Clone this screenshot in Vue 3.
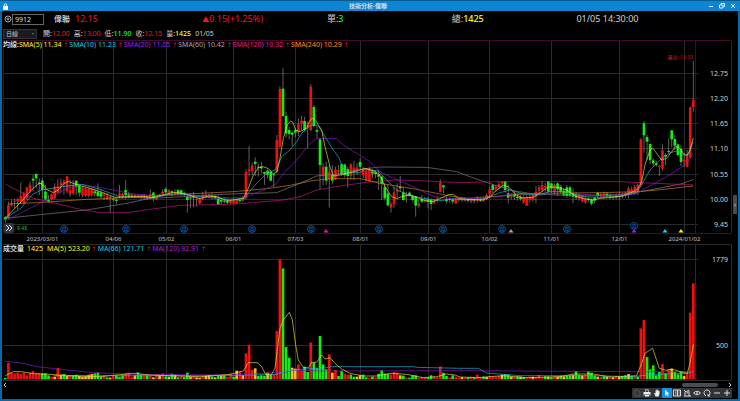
<script setup>
// Chart data is kept on a fine grid: three units per drawing unit.
const STEP = 9.2556
const cx = (i) => 16 + i * STEP

// colour, high, body top, body bottom, low
const candleData = `
g 498 502 508 518|r 455 465 503 508|r 448 460 466 470|r 446 452 455 475|r 445 448 454 478|r 398 438 455 462|r 425 430 460 463|r 410 413 445 450|r 395 404 424 430|g 375 386 392 425|
g 370 372 385 415|g 385 398 402 435|g 385 392 420 445|g 405 425 448 452|g 435 450 455 458|r 430 433 448 452|r 400 410 445 448|r 388 408 428 432|r 386 398 405 430|r 388 394 400 435|
r 378 379 424 430|r 390 420 433 440|r 390 405 430 435|g 390 392 410 435|g 405 408 428 440|r 408 412 436 442|r 412 415 437 440|r 414 416 438 441|r 415 417 434 440|g 418 424 430 440|
g 400 425 438 443|g 420 428 440 445|r 428 433 437 450|r 430 438 445 450|r 438 440 444 488|g 443 446 449 455|g 445 449 453 463|r 405 430 436 445|r 428 432 440 445|g 390 420 435 448|
g 425 433 437 445|r 430 433 440 444|r 432 436 440 445|r 434 438 441 444|r 435 438 443 448|g 432 440 443 448|r 436 440 447 450|r 418 432 442 448|g 425 428 445 455|r 438 441 447 450|
r 432 434 438 440|r 418 425 432 438|g 412 417 427 432|r 418 422 430 433|g 420 424 428 440|r 418 427 430 436|g 418 420 432 436|g 418 421 433 436|g 425 430 434 440|g 436 441 450 488|
g 430 442 445 475|g 425 440 443 472|r 440 446 450 470|r 442 446 460 463|r 425 434 447 450|r 420 434 440 445|r 430 436 440 445|g 428 437 441 448|g 434 438 444 448|g 436 447 463 465|
g 445 450 455 462|g 446 452 455 460|g 448 452 458 463|r 450 453 459 463|r 445 452 460 462|r 447 449 459 462|g 445 450 453 458|r 438 443 452 455|r 358 366 444 448|r 288 358 364 380|
r 338 346 363 375|g 322 335 342 378|g 342 350 353 380|g 335 350 355 370|g 365 366 371 405|g 358 362 374 385|g 360 366 392 394|g 370 373 376 412|r 255 270 365 368|r 110 117 290 295|
g 55 116 198 200|g 186 198 250 262|g 230 240 252 268|g 245 248 254 288|g 235 240 248 262|r 205 221 246 258|r 198 212 222 240|g 200 213 240 245|r 215 225 232 295|r 102 110 240 243|
g 165 171 228 232|g 230 240 245 265|g 262 268 345 418|r 340 350 376 405|g 335 350 392 405|r 345 366 388 473|g 345 375 392 403|r 350 358 388 390|r 345 360 365 375|g 340 343 372 378|
g 340 344 375 382|g 350 357 378 413|r 340 343 378 388|r 332 354 362 390|r 340 352 362 375|g 325 336 350 358|r 350 359 376 385|r 355 362 390 395|r 350 356 393 396|g 358 364 371 385|
g 362 367 372 385|g 360 374 380 420|g 378 380 402 450|g 400 412 445 452|g 402 430 466 470|r 455 462 473 488|r 410 427 463 473|r 400 420 425 445|g 378 410 415 425|g 410 427 450 452|
r 425 432 438 458|g 424 428 438 440|g 435 438 450 455|g 437 439 467 500|r 450 460 468 475|g 435 447 455 460|r 440 448 452 458|g 440 448 455 475|g 445 450 462 480|r 447 450 458 463|
r 440 446 450 458|r 388 397 425 427|g 404 406 412 430|g 440 447 453 460|g 442 447 450 458|g 445 449 455 462|r 443 447 460 462|r 444 447 451 455|g 443 447 450 456|r 442 447 451 455|
g 443 448 452 458|r 444 450 454 460|g 445 449 452 460|r 438 445 452 458|g 443 448 452 456|r 440 445 452 455|r 430 435 448 450|r 410 418 434 445|g 402 405 420 430|r 405 410 418 425|
r 395 402 412 420|r 393 395 400 410|g 392 394 420 428|g 405 430 443 460|r 430 435 440 448|g 425 433 440 450|g 432 440 444 452|g 436 441 447 452|r 436 443 458 460|r 436 441 467 468|
r 435 440 450 458|r 430 434 450 455|r 408 425 440 460|r 405 412 422 428|r 393 405 420 425|r 400 408 412 425|g 393 394 425 428|g 398 400 415 430|r 400 405 425 433|g 398 400 418 438|
g 405 410 425 430|g 415 422 435 440|g 405 412 438 443|g 408 412 436 440|g 415 430 440 460|g 425 437 443 450|r 430 437 446 452|r 435 438 453 458|r 440 446 457 462|g 443 445 449 455|
g 445 448 461 466|g 440 443 452 460|g 425 428 438 445|r 428 432 438 443|r 425 430 440 445|g 426 431 439 443|g 430 434 440 448|r 432 437 441 450|g 430 437 441 448|r 425 433 440 450|
r 428 433 438 445|r 425 430 436 442|r 410 415 435 445|r 410 418 428 435|r 405 410 430 433|r 400 405 425 435|r 265 268 405 410|g 213 220 256 308|g 255 261 275 330|g 280 282 330 342|
g 325 331 340 348|g 332 340 345 350|r 345 347 350 378|r 283 302 356 362|g 310 315 320 345|g 265 303 306 310|g 240 241 268 292|g 255 267 287 300|g 280 283 315 320|g 285 297 336 348|
r 310 330 334 352|r 300 318 350 352|r 170 172 322 325|r 33 150 172 185`

const candles = candleData.trim().split('|').map((row, i) => {
  const [color, high, top, bottom, low] = row.trim().split(' ')
  return { x: cx(i), color, high: +high, top: +top, h: bottom - top, low: +low }
})

// colour and height of each volume bar; the rally is a run of its own
const RALLY_START = 206
const quietVolume = `
g4 r50 r20 r18 r20 r16 r20 r12 r20 r25 r18 r18 g18 g18 g12 r8 y8 r34 y14 g16 y10 r12 g12 g14 y10 y8 y9 y14 y16 g18
g20 g8 r12 g6 y5 r10 g12 g8 g12 r18 r20 r8 y12 g21 g14 r12 g12 r10 y6 r14 y12 r18 g9 y8 g17 y14 g6 r9 g7 g20
y8 r9 y6 y5 r8 y10 y13 g9 y6 g11 y12 g12 r7 r17 g8 y26 r24 y12 r78 r104 r28 y33 g10 g12 g10 y20 g13 r14
r145 r360 g333 g97 g65 y35 y32 r45 r25 g38 g22 r111 g50 g33 g130 g45 g30 r75 y20 r28 g10 g25 r16 r14 g14 g8 y8 y12 g14 g6
r5 g8 r6 g17 g27 g17 g16 r15 r22 r20 y12 g11 r5 g5 g12 g12 r5 r7 r6 g6 g12 r8 r6 r39 g20 g10 r6 g12 r8 r5 y6
r5 g6 r8 g5 r14 r6 g8 y7 r9 r8 r8 r10 y14 g16 g14 y8 r7 g9 y8 g7 r6 r8 y8 r7 r13 r6 g9 y8 g6 r9
y8 g11 y9 g10 g12 y14 g25 g14 y12 r14 g24 g20 g12 y8 r7 g9 y7 r8 y6 r9 y7 g10 g12 y16 g9 r8 g8 y10 r14 r12`
const rallyVolume = 'r153 r178 g67 g30 g42 g12 g22 r46 g18 r30 y32 g22 g15 g24 y10 r20 r200 r288'
const toBars = (text, start) => text.trim().split(/\s+/).map((v, i) => ({
  x: cx(start + i) - 4, color: v[0], h: +v.slice(1)
}))
const bars = [...toBars(quietVolume, 0).slice(0, RALLY_START), ...toBars(rallyVolume, RALLY_START)]

const priceLines = [
  { name: 'sma60', points: '16,505 130,493 260,480 380,460 450,445 550,440 690,432 830,428 900,400 950,378 1010,372 1080,358 1140,351 1280,352 1370,365 1415,382 1480,404 1540,422 1600,432 1700,436 1850,435 1950,420 2050,400 2080,388' },
  { name: 'sma120', points: '16,403 60,425 100,445 180,463 240,478 300,488 380,488 450,478 540,466 690,463 760,458 850,450 900,440 950,420 1020,408 1100,397 1190,390 1260,392 1380,398 1500,395 1860,395 1920,398 2080,405' },
  { name: 'sma240', points: '25,462 130,457 260,448 380,443 500,434 600,430 700,425 800,416 870,406 930,393 990,386 1080,386 1140,400 1250,418 1350,438 1400,445 1500,438 1600,430 1800,428 1920,425 2000,417 2080,408' },
  { name: 'sma20', points: '25,508 80,480 130,455 200,415 245,403 330,418 400,432 480,438 560,434 690,444 740,440 790,420 828,402 850,370 890,330 930,280 950,266 1010,266 1030,285 1070,310 1110,335 1140,365 1180,385 1240,410 1300,440 1380,448 1500,440 1540,430 1640,432 1720,430 1800,438 1912,432 1930,418 1960,402 2000,380 2040,355 2060,340 2080,310' },
  { name: 'sma10', points: '16,505 62,475 99,432 125,420 170,413 200,408 245,403 300,418 360,440 450,444 530,430 600,440 690,448 733,446 760,410 800,370 825,360 835,345 845,320 870,300 890,275 905,250 920,235 935,225 955,228 975,260 1000,300 1018,325 1026,350 1040,368 1080,368 1095,358 1135,363 1160,390 1190,420 1230,436 1270,445 1320,452 1360,447 1400,450 1450,447 1500,428 1530,420 1570,432 1620,435 1650,424 1700,425 1750,440 1800,442 1860,440 1910,428 1930,395 1950,360 1980,330 2010,308 2030,303 2050,313 2065,315 2080,275' },
  { name: 'sma5', points: '16,505 62,457 99,415 118,400 127,402 140,418 160,428 175,420 190,402 205,394 225,402 245,408 270,415 300,425 345,442 380,440 430,438 455,443 490,435 520,427 550,430 575,438 600,446 625,438 650,440 675,450 690,452 730,445 745,415 760,375 775,353 790,350 805,356 820,372 831,365 840,325 850,265 862,225 872,213 878,216 887,240 900,245 920,235 928,215 935,205 945,208 955,225 965,240 975,290 990,350 1000,378 1020,375 1050,368 1075,362 1095,355 1120,362 1140,375 1155,410 1175,440 1190,446 1205,440 1230,435 1250,442 1275,452 1300,455 1320,446 1345,434 1360,433 1375,445 1400,448 1450,450 1470,440 1490,420 1510,406 1525,410 1550,436 1570,444 1600,442 1625,425 1645,411 1670,412 1700,420 1730,440 1760,448 1780,450 1800,445 1840,442 1870,437 1900,425 1915,415 1925,395 1935,345 1950,300 1958,294 1970,310 1985,330 2000,325 2015,305 2027,290 2040,295 2050,310 2060,318 2070,300 2080,264' }
]
const volumeLines = [
  { name: 'sma20', points: '16,409 70,415 110,425 200,435 280,443 400,448 690,450 850,442 880,436 980,438 1380,437 1900,440 2080,440' },
  { name: 'sma10', points: '160,452 690,452 830,448 850,440 870,435 980,428 990,425 1240,425 1250,427 1380,430 1435,430 1460,444 1560,452 1780,452 1900,455 1960,448 2060,445 2080,440' },
  { name: 'sma5', points: '16,452 40,440 65,440 100,446 150,448 200,452 300,455 400,445 450,450 600,455 690,448 730,438 745,413 772,413 785,425 797,448 815,448 825,430 840,310 850,285 868,262 877,285 887,360 895,405 910,428 925,428 935,412 950,412 965,390 975,402 990,398 1005,415 1025,432 1050,445 1090,453 1130,453 1170,445 1220,448 1270,458 1310,455 1340,447 1365,450 1380,456 1430,458 1510,452 1580,458 1680,455 1720,447 1780,447 1830,456 1910,452 1925,415 1935,385 1958,370 1968,400 1978,430 2000,436 2015,432 2040,440 2062,445 2070,415 2080,358' }
]

const gridX = [42.5, 113.5, 166.5, 233.5, 295.5, 360.5, 428.5, 489.5, 551.5, 619.5, 684.5]
const dates = ['2023/03/01', '04/06', '05/02', '06/01', '07/03', '08/01', '09/01', '10/02', '11/01', '12/01', '2024/01/02']
const priceTicks = [
  [73.5, '12.75'], [98.5, '12.20'], [123.5, '11.65'], [148.5, '11.10'], [174.5, '10.55'], [199.5, '10.00'], [224.5, '9.45']
]
const volumeTicks = [[259.5, '1779'], [345.5, '500']]
const monthMarks = [[64, 229], [126, 229], [184, 229], [252, 229], [311, 229], [379, 229], [443, 229], [502, 229], [567, 229], [634, 226]]
const flags = [[326, 'magenta'], [511, 'grey'], [634, 'violet'], [665, 'cyan'], [681, 'yellow']]

const quotes = [
  ['開', '12.00', 'red'], ['高', '13.00', 'red'], ['低', '11.90', 'green'], ['收', '12.15', 'red'], ['量', '1425', 'yellow']
]
const smaLegend = [
  ['SMA(5) 11.34', 'yellow'], ['SMA(10) 11.23', 'cyan'], ['SMA(20) 11.05', 'violet'],
  ['SMA(60) 10.42', 'grey'], ['SMA(120) 10.32', 'magenta'], ['SMA(240) 10.29', 'orange']
]
const maLegend = [['MA(5) 523.20', 'yellow'], ['MA(66) 121.71', 'cyan'], ['MA(120) 92.91', 'violet']]

const tools = [
  { name: '文件', cls: 'dim', d: 'M3 2h3l2 2v4H3z' },
  { name: '列印', cls: 'solid', d: 'M3 1.500h3l1 1V4h1.500v3.500H7.500V6h-5v1.500H1.500V4H3zM3.500 2.200V4h3V3L5.800 2.200zM3 6.500h4v2H3z' },
  { name: '拖曳', cls: 'solid', d: 'M2 5l1 0 .5 1V2.500h1V1.500h1v.7h1v.8h1V6L6.500 8.500h-3z' },
  { name: '選取', cls: 'solid active', d: 'M3 1.500L7.500 6H5.700L6.700 8l-1 .5L4.700 6.500 3 8z' },
  { name: '數值', d: 'M1.500 2h7v6h-7zM3 4h1.500M3 6h1.500M5.500 2v6M6.500 4h1M6.500 6h1' },
  { name: '畫線', d: 'M2 2l2 2 3-2M3 4v3.500M7 3v5M2 8h7M5 5.500L6 4' },
  { name: '顯示', d: 'M1.500 5Q5 1.500 8.500 5Q5 8.500 1.500 5zM4.500 5a.5.5 0 1 0 1 0a.5.5 0 1 0-1 0' },
  { name: '重設', d: 'M4 7.800A3 3 0 1 1 6.500 7.600M6 6v2h2' },
  { name: '縮小', d: 'M2 5h6' },
  { name: '放大', d: 'M2 5h6M5 2v6' }
]
</script>

<template>
  <div class="window">
    <header class="titlebar">
      <svg class="lock" viewBox="0 0 6 8"><path d="M1.500 4V2.200a1.500 1.500 0 0 1 3 0V4" fill="none" stroke="#fff" /><path d="M0 3.500h6V8H0z" fill="#fff" /></svg>
      <h1>技術分析-偉聯</h1>
      <div class="controls">
        <button aria-label="最小化"><svg viewBox="0 0 6 6"><path d="M1 3.500h4" /></svg></button>
        <button aria-label="還原"><svg viewBox="0 0 6 6"><path d="M2 1.500V.5h3.500v3h-1M.5 2h3.500v3H.5z" /></svg></button>
        <button aria-label="關閉"><svg viewBox="0 0 6 6"><path d="M1 1l4 4M5 1L1 5" /></svg></button>
      </div>
    </header>

    <main>
      <section class="summary">
        <div class="symbol">
          <button class="add" aria-label="加入"><svg viewBox="0 0 8 8"><circle cx="4" cy="4" r="3" /><path d="M2.500 4h3M4 2.500v3" /></svg></button>
          <input class="code" value="9912" aria-label="代號">
          <span class="name">偉聯</span>
          <span class="red">12.15</span>
        </div>
        <span class="red"><small>▲</small>0.15(+1.25%)</span>
        <span>單:<span class="green">3</span></span>
        <span>總:<span class="yellow">1425</span></span>
        <time>01/05 14:30:00</time>
      </section>

      <section class="quotes">
        <div class="period">
          <select aria-label="週期"><option>日線</option></select>
        </div>
        <span v-for="q in quotes" :key="q[0]">{{ q[0] }}:<span :class="q[2]">{{ q[1] }}</span></span>
        <span>01/05</span>
      </section>

      <section class="panel">
        <div class="legend">
          <b>均線:</b>
          <span v-for="s in smaLegend" :key="s[0]" :class="s[1]">{{ s[0] }} <i>↑</i></span>
        </div>
        <svg class="chart" viewBox="2 40 736 204">
          <g class="grid">
            <path v-for="x in gridX" :key="x" :d="`M${x} 41V233`" />
            <path v-for="t in priceTicks" :key="t[1]" :d="`M3 ${t[0]}H698`" />
            <path d="M731.5 41V233" />
          </g>
          <path class="frame" d="M3 40.500H731M3 233.500H731M695.500 41V233M3.500 41V233" />
          <g transform="translate(0 50) scale(.33333)">
            <g v-for="c in candles" :key="c.x" :class="['candle', c.color]">
              <path :d="`M${c.x} ${c.high}V${c.low}`" />
              <rect :x="c.x - 4" :y="c.top" width="8" :height="c.h" />
            </g>
            <polyline v-for="l in priceLines" :key="l.name" :class="['line', l.name]" :points="l.points" />
          </g>
          <g v-for="m in monthMarks" :key="m[0]" class="month">
            <circle :cx="m[0]" :cy="m[1]" r="3.500" />
            <text :x="m[0]" :y="m[1] + 2">月</text>
          </g>
          <path v-for="f in flags" :key="f[0]" :class="['flag', f[1]]" :d="`M${f[0]} 229l2.500 3.500h-5z`" />
          <text class="extreme high" x="693" y="59">最高: 13.00</text>
          <text class="extreme low" x="27" y="230">最低: 9.48</text>
          <g class="expand">
            <rect x="4" y="223" width="10" height="10" rx="2" />
            <path d="M6 225l3 3-3 3M9 225l3 3-3 3" />
          </g>
          <text v-for="t in priceTicks" :key="t[1]" class="tick" x="728" :y="t[0] + 2">{{ t[1] }}</text>
          <text v-for="(d, i) in dates" :key="d" class="date" :x="gridX[i]" y="241">{{ d }}</text>
        </svg>
        <button class="handle" aria-label="展開側欄">‹</button>
      </section>

      <section class="panel">
        <div class="legend volume">
          <b>成交量</b><span class="yellow total">1425</span>
          <span v-for="s in maLegend" :key="s[0]" :class="s[1]">{{ s[0] }} <i>↑</i></span>
        </div>
        <svg class="chart" viewBox="2 244 736 137">
          <g class="grid">
            <path v-for="x in gridX" :key="x" :d="`M${x} 245V380`" />
            <path v-for="t in volumeTicks" :key="t[1]" :d="`M3 ${t[0]}H698`" />
            <path d="M3 244.500H731.500V380.500H3M695.500 245V380" />
          </g>
          <g transform="translate(0 225) scale(.33333)">
            <rect v-for="b in bars" :key="b.x" :class="['bar', b.color]" :x="b.x" :y="463 - b.h" width="8" :height="b.h" />
            <polyline v-for="l in volumeLines" :key="l.name" :class="['line', l.name]" :points="l.points" />
          </g>
          <text v-for="t in volumeTicks" :key="t[1]" class="tick" x="728" :y="t[0] + 2">{{ t[1] }}</text>
        </svg>
      </section>

      <footer>
        <div class="scroll">
          <button aria-label="向左捲動"><svg viewBox="0 0 4 6"><path d="M3 1L1 3l2 2" /></svg></button>
          <span class="thumb"></span>
          <button aria-label="向右捲動"><svg viewBox="0 0 4 6"><path d="M1 1l2 2-2 2" /></svg></button>
        </div>
        <nav class="tools">
          <button v-for="t in tools" :key="t.name" :class="t.cls" :aria-label="t.name"><svg viewBox="0 0 10 10"><path :d="t.d" /></svg></button>
        </nav>
      </footer>
    </main>
  </div>
</template>

<style>
body { margin: 0; background: #000; }
</style>

<style scoped>
.window { background: #0868a4; padding: 0 2px 2px; font-family: "Noto Sans", "Noto Sans CJK TC", sans-serif; font-size: 7px; line-height: 10px; color: #d0d0d0; }
main { background: #000; }
button { padding: 0; border: 0; background: none; color: inherit; font: inherit; display: flex; align-items: center; justify-content: center; }
button svg { fill: none; stroke: #ccc; }
.red { color: #f01818; }
.green { color: #18f030; }
.yellow { color: #fcf820; }
.cyan { color: #14cce8; }
.violet { color: #a020e8; }
.grey { color: #a4a4a4; }
.magenta { color: #ec1c9c; }
.orange { color: #fc9018; }

.titlebar { display: flex; align-items: center; justify-content: space-between; height: 11px; margin: 0 -2px; padding: 0 4px 0 3px; border-top: 1px solid #075c94; box-sizing: border-box; background: #0c86d0; }
.titlebar h1 { margin: 0; font-size: 6px; line-height: 8px; font-weight: 500; color: #e4f2fb; }
.lock { width: 5px; height: 7px; margin-right: 20px; }
.controls { display: flex; gap: 5px; }
.controls svg { width: 6px; height: 6px; stroke: #e4f2fb; }

.summary { display: grid; grid-template-columns: 27% 17% 17% 17% 1fr; align-items: center; height: 16px; padding-left: 2px; font-size: 9px; line-height: 12px; }
.summary small { font-size: 7px; }
.summary .yellow, .summary .green, .quotes .yellow, .quotes .green { font-weight: 500; }
.symbol { display: flex; align-items: center; }
.add svg { width: 8px; height: 8px; stroke-width: .8; }
.code { width: 32px; height: 11px; box-sizing: border-box; margin: 0 10px 0 0; padding: 0 2px; border: 1px solid #666; background: #000; color: #ddd; font: 7px/9px "Noto Sans", sans-serif; }
.name { color: #ddd; margin-right: 5px; font-size: 8px; font-weight: 500; }

.quotes { display: flex; align-items: center; gap: 4px; height: 13px; padding: 1px 0 0 1px; box-sizing: border-box; }
.period { position: relative; width: 34px; height: 10px; margin-right: 2px; }
.period select { display: block; width: 100%; height: 10px; padding: 0 2px; box-sizing: border-box; border: 1px solid #333; background: #191b1e; color: #ccc; appearance: none; font: 6px/8px "Noto Sans", "Noto Sans CJK TC", sans-serif; }
.period::after { content: ""; position: absolute; right: 3px; top: 4px; border: 1px solid transparent; border-top: 2px solid #777; }

.panel { position: relative; }
.chart { display: block; width: 100%; height: auto; }
.legend { position: absolute; top: 0; left: 1px; display: flex; gap: 1px; white-space: nowrap; }
.legend b { font-weight: 500; color: #eee; margin-right: -1px; }
.legend i { font-style: normal; color: #e01414; font-family: "DejaVu Sans", sans-serif; font-size: 6px; }
.legend.volume b { margin: 0 2px 0 0; }
.legend .total { margin-right: 3px; }
.grid path { stroke: #2a2a2a; fill: none; }
.frame { stroke: #440a2a; fill: none; }
.candle path { stroke: #909090; stroke-width: 2; }
.candle.r rect, .bar.r { fill: #ec1010; }
.candle.g rect, .bar.g { fill: #14ec14; }
.bar.y { fill: #f8b828; }
.line { fill: none; stroke-width: 2; stroke-linejoin: round; }
.sma5 { stroke: #e8e038; }
.sma10 { stroke: #20b8d4; }
.sma20 { stroke: #881cd0; }
.sma60 { stroke: #808080; }
.sma120 { stroke: #c41880; }
.sma240 { stroke: #d47c1c; }
.month circle { fill: #000814; stroke: #0a4c88; }
.month text { fill: #1070c4; font-size: 5px; text-anchor: middle; }
.flag { fill: currentColor; }
.flag.magenta { color: #f010a0; }
.flag.violet { color: #b010f0; }
.flag.cyan { color: #10e0f0; }
.extreme { font-size: 5px; text-anchor: end; }
.extreme.high { fill: #dc1010; }
.extreme.low { fill: #14c820; }
.expand rect { fill: #30363c; }
.expand path { fill: none; stroke: #eee; }
.tick { fill: #d0d0d0; font-size: 7px; text-anchor: end; }
.date { fill: #c0c0c0; font-size: 6px; text-anchor: middle; }
.handle { position: absolute; right: 1px; top: 76%; width: 4px; height: 19px; background: #4a4a4a; color: #ccc; }

footer { padding: 0 6px 1px 1px; }
.scroll { display: flex; align-items: center; height: 7px; }
.scroll svg { width: 4px; height: 6px; }
.thumb { width: 36px; height: 4px; margin: 0 10px 0 auto; border-radius: 2px; background: #4c4c4c; }
.tools { display: flex; justify-content: flex-end; }
.tools button { width: 10px; height: 10px; background: #303438; }
.tools svg { width: 10px; height: 10px; stroke: #ddd; }
.tools .dim svg { stroke: #555; }
.tools .solid svg { fill: #eee; fill-rule: evenodd; stroke: none; }
.tools .active { background: #1490e0; }
</style>
